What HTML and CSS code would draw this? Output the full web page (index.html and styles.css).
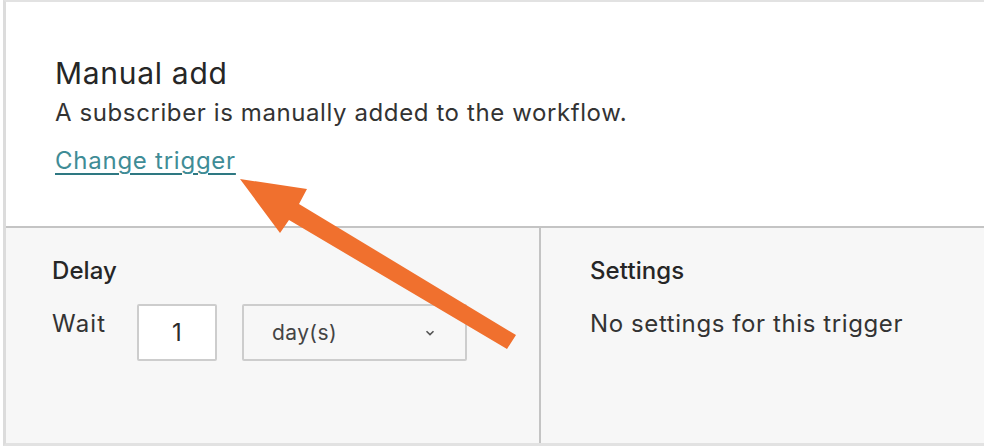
FILE: index.html
```html
<!DOCTYPE html>
<html>
<head>
<meta charset="utf-8">
<link rel="stylesheet" href="styles.css">
</head>
<body>
<div class="frame">
  <section class="top">
    <h1 class="title">Manual add</h1>
    <p class="desc">A subscriber is manually added to the workflow.</p>
    <a class="link" href="#">Change trigger</a>
  </section>
  <section class="bottom">
    <div class="col delay">
      <h2 class="label">Delay</h2>
      <div class="row">
        <span class="wait">Wait</span>
        <div class="num">1</div>
        <div class="select"><span>day(s)</span>
          <svg class="chev" width="10" height="6" viewBox="0 0 10 6"><path d="M1.5 1.2 L5 4.6 L8.5 1.2" fill="none" stroke="#555" stroke-width="1.6"/></svg>
        </div>
      </div>
    </div>
    <div class="col settings">
      <h2 class="label">Settings</h2>
      <p class="none">No settings for this trigger</p>
    </div>
  </section>
</div>
<svg class="arrow" width="984" height="446" viewBox="0 0 984 446">
  <polygon fill="#f0702e" points="240,179 307,189 299,204 516,335 507,349 289,220 280,233"/>
</svg>
</body>
</html>
```
FILE: styles.css
```css
html, body {
  margin: 0;
  padding: 0;
  background: #ffffff;
}
body {
  font-family: "Inter", "Open Sans", sans-serif;
  color: #2b2b2b;
  width: 984px;
  height: 446px;
  overflow: hidden;
  position: relative;
}
.frame {
  margin-left: 3px;
  border-left: 3px solid #dcdcdc;
  border-top: 2px solid #e2e2e2;
  border-bottom: 3px solid #e2e2e2;
  height: 441px;
  display: flex;
  flex-direction: column;
}
.top {
  height: 224px;
  box-sizing: border-box;
  padding: 53px 0 0 49px;
  background: #fff;
}
.title {
  margin: 0;
  font-weight: 400;
  font-size: 30px;
  line-height: 36px;
  color: #262626;
  letter-spacing: 0.7px;
}
.desc {
  margin: 8px 0 0;
  font-size: 24px;
  line-height: 28px;
  color: #333;
  letter-spacing: 0.6px;
}
.link {
  display: inline-block;
  margin-top: 20px;
  font-size: 24px;
  line-height: 28px;
  color: #3f8c96;
  letter-spacing: 0.75px;
  text-decoration: underline;
  text-decoration-color: #2e7882;
  text-underline-offset: 4px;
  text-decoration-thickness: 2px;
}
.bottom {
  flex: 1;
  display: grid;
  grid-template-columns: 535px 1fr;
  background: #f7f7f7;
  border-top: 2px solid #c4c4c4;
}
.col {
  padding-top: 29px;
}
.delay {
  border-right: 2px solid #c4c4c4;
  padding-left: 46px;
}
.settings {
  padding-left: 49px;
}
.label {
  margin: 0;
  font-size: 24px;
  font-weight: 500;
  line-height: 28px;
  color: #262626;
  letter-spacing: 0.1px;
}
.row {
  display: flex;
  align-items: flex-start;
  margin-top: 19px;
}
.wait {
  font-size: 24px;
  line-height: 28px;
  color: #333;
  letter-spacing: 1.2px;
  width: 85px;
  margin-top: 6px;
}
.num {
  width: 80px;
  height: 57px;
  box-sizing: border-box;
  border: 2px solid #cdcdcd;
  border-radius: 2px;
  background: #fff;
  font-size: 24px;
  line-height: 53px;
  text-align: center;
  color: #2b2b2b;
}
.select {
  margin-left: 25px;
  width: 225px;
  height: 57px;
  box-sizing: border-box;
  border: 2px solid #cdcdcd;
  border-radius: 2px;
  display: flex;
  align-items: center;
  justify-content: space-between;
  padding: 0 30px 0 28px;
  font-size: 21px;
  letter-spacing: 0.4px;
  color: #444;
}
.none {
  margin: 25px 0 0;
  font-size: 24px;
  line-height: 28px;
  color: #333;
  letter-spacing: 0.6px;
}
.arrow {
  position: absolute;
  left: 0;
  top: 0;
  pointer-events: none;
}
```
